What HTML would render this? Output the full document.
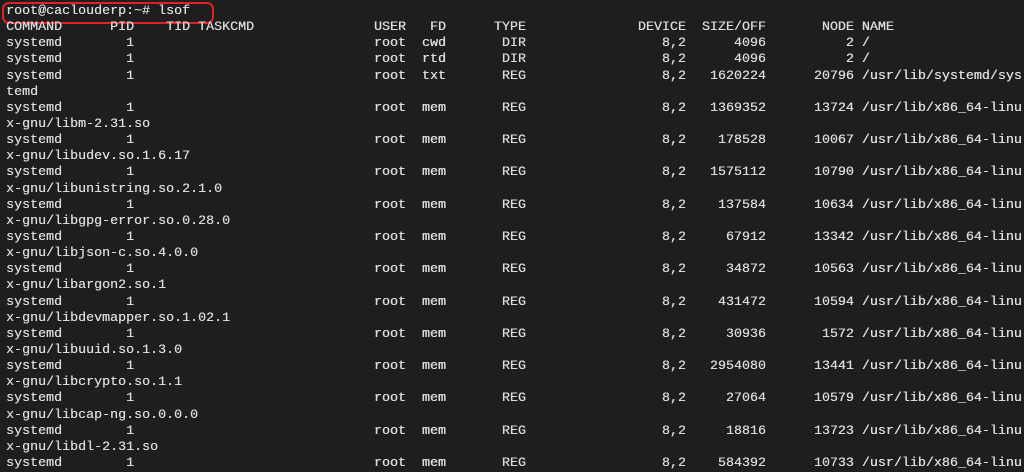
<!DOCTYPE html>
<html><head><meta charset="utf-8"><style>
html,body{margin:0;padding:0;background:#1e1e1e;width:1024px;height:471px;overflow:hidden}
pre{position:absolute;left:6px;top:4px;margin:0;font-family:"Liberation Mono",monospace;font-size:13.33px;line-height:16.14px;color:#dcdcdc;white-space:pre;text-shadow:0.3px 0 0 #dcdcdc}
.box{position:absolute;left:2px;top:2px;width:208px;height:18px;border:2px solid #e0202a;border-radius:7px}
</style></head><body>
<div class="box"></div>
<pre>root@caclouderp:~# lsof
COMMAND      PID    TID TASKCMD               USER   FD      TYPE              DEVICE  SIZE/OFF       NODE NAME
systemd        1                              root  cwd       DIR                 8,2      4096          2 /
systemd        1                              root  rtd       DIR                 8,2      4096          2 /
systemd        1                              root  txt       REG                 8,2   1620224      20796 /usr/lib/systemd/sys
temd
systemd        1                              root  mem       REG                 8,2   1369352      13724 /usr/lib/x86_64-linu
x-gnu/libm-2.31.so
systemd        1                              root  mem       REG                 8,2    178528      10067 /usr/lib/x86_64-linu
x-gnu/libudev.so.1.6.17
systemd        1                              root  mem       REG                 8,2   1575112      10790 /usr/lib/x86_64-linu
x-gnu/libunistring.so.2.1.0
systemd        1                              root  mem       REG                 8,2    137584      10634 /usr/lib/x86_64-linu
x-gnu/libgpg-error.so.0.28.0
systemd        1                              root  mem       REG                 8,2     67912      13342 /usr/lib/x86_64-linu
x-gnu/libjson-c.so.4.0.0
systemd        1                              root  mem       REG                 8,2     34872      10563 /usr/lib/x86_64-linu
x-gnu/libargon2.so.1
systemd        1                              root  mem       REG                 8,2    431472      10594 /usr/lib/x86_64-linu
x-gnu/libdevmapper.so.1.02.1
systemd        1                              root  mem       REG                 8,2     30936       1572 /usr/lib/x86_64-linu
x-gnu/libuuid.so.1.3.0
systemd        1                              root  mem       REG                 8,2   2954080      13441 /usr/lib/x86_64-linu
x-gnu/libcrypto.so.1.1
systemd        1                              root  mem       REG                 8,2     27064      10579 /usr/lib/x86_64-linu
x-gnu/libcap-ng.so.0.0.0
systemd        1                              root  mem       REG                 8,2     18816      13723 /usr/lib/x86_64-linu
x-gnu/libdl-2.31.so
systemd        1                              root  mem       REG                 8,2    584392      10733 /usr/lib/x86_64-linu</pre>
</body></html>
